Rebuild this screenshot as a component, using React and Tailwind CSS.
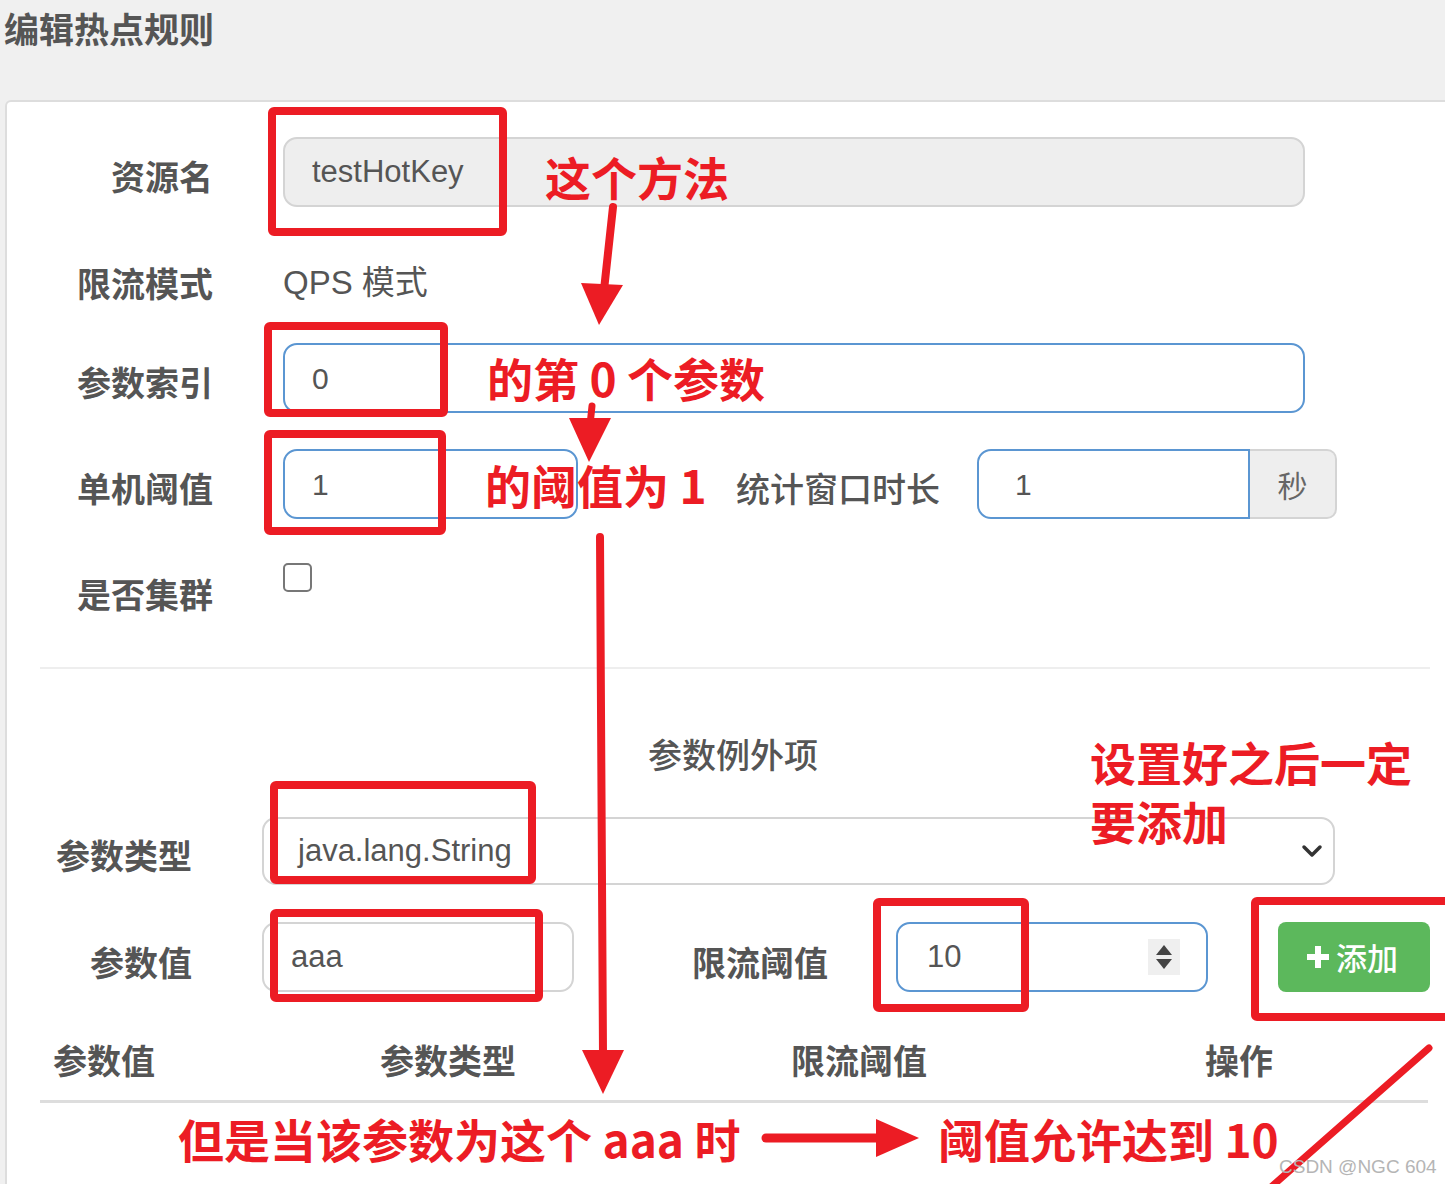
import React from "react";

const RED = "#ec1c24";

function Label({ children, w = "w-[206px]", pt = "pt-[8px]" }) {
  return (
    <div className={`${w} ${pt} shrink-0 text-right text-[34px] font-bold leading-[44px] text-[#555]`}>
      {children}
    </div>
  );
}

function Annotations() {
  return (
    <svg
      className="pointer-events-none absolute left-0 top-0"
      width="1445"
      height="1184"
      viewBox="0 0 1445 1184"
    >
      <g fill="none" stroke={RED} strokeWidth="8" strokeLinejoin="round">
        <rect x="272" y="111" width="231" height="121" rx="2" />
        <rect x="268" y="326" width="176" height="87" rx="2" />
        <rect x="268" y="434" width="174" height="97" rx="2" />
        <rect x="274" y="785" width="258" height="95" rx="2" />
        <rect x="274" y="913" width="265" height="85" rx="2" />
        <rect x="877" y="902" width="148" height="106" rx="2" />
        <rect x="1255" y="901" width="220" height="116" rx="2" />
      </g>
      <g stroke={RED} strokeLinecap="round" fill="none">
        <line x1="613" y1="207" x2="604" y2="290" strokeWidth="8" />
        <line x1="592" y1="406" x2="590" y2="425" strokeWidth="7" />
        <line x1="600" y1="537" x2="603" y2="1055" strokeWidth="8" />
        <line x1="766" y1="1138" x2="882" y2="1138" strokeWidth="9" />
        <line x1="1429" y1="1048" x2="1262" y2="1195" strokeWidth="7" />
      </g>
      <g fill={RED}>
        <polygon points="581,283 623,285 599,325" />
        <polygon points="569,418 611,418 589,462" />
        <polygon points="582,1050 624,1050 603,1094" />
        <polygon points="876,1119 876,1157 919,1138" />
      </g>
    </svg>
  );
}

export default function App() {
  return (
    <div className="relative h-[1184px] w-[1445px] overflow-hidden bg-[#f0f0f0] font-['Liberation_Sans','Noto_Sans_CJK_SC',sans-serif]">
      <div className="h-[100px] pl-[4px] pt-[6px] text-[35px] font-bold leading-[44px] text-[#555] font-['Noto_Sans_CJK_SC',sans-serif]">
        编辑热点规则
      </div>

      <div className="ml-[5px] h-[1100px] w-[1470px] rounded-tl-[6px] border-2 border-[#ddd] bg-white pt-[35px] font-['Noto_Sans_CJK_SC','Liberation_Sans',sans-serif]">
        {/* 资源名 */}
        <div className="flex h-[70px] items-center">
          <Label>资源名</Label>
          <div className="ml-[70px] flex h-[70px] w-[1022px] items-center rounded-[14px] border-2 border-[#d4d4d4] bg-[#eee] pl-[27px] text-[31px] text-[#555] font-['Liberation_Sans',sans-serif]">
            testHotKey
          </div>
        </div>

        {/* 限流模式 */}
        <div className="mt-[41px] flex h-[70px] items-center">
          <Label pt="pt-0">限流模式</Label>
          <div className="ml-[70px] text-[33px] leading-[44px] text-[#555] font-['Liberation_Sans','Noto_Sans_CJK_SC',sans-serif]">
            QPS 模式
          </div>
        </div>

        {/* 参数索引 */}
        <div className="mt-[25px] flex h-[70px] items-center">
          <Label>参数索引</Label>
          <div className="ml-[70px] flex h-[70px] w-[1022px] items-center rounded-[14px] border-2 border-[#5b96d2] pl-[27px] text-[30px] text-[#555] font-['Liberation_Sans',sans-serif]">
            0
          </div>
        </div>

        {/* 单机阈值 */}
        <div className="mt-[36px] flex h-[70px] items-center">
          <Label>单机阈值</Label>
          <div className="ml-[70px] flex h-[70px] w-[295px] items-center rounded-[14px] border-2 border-[#5b96d2] pl-[27px] text-[30px] text-[#555] font-['Liberation_Sans',sans-serif]">
            1
          </div>
          <div className="w-[362px] pt-[8px] text-right text-[34px] font-medium leading-[44px] text-[#555]">
            统计窗口时长
          </div>
          <div className="ml-[37px] flex h-[70px] w-[360px]">
            <div className="flex h-full w-[273px] items-center rounded-l-[14px] border-2 border-[#5b96d2] pl-[36px] text-[30px] text-[#555] font-['Liberation_Sans',sans-serif]">
              1
            </div>
            <div className="flex h-full flex-1 items-center justify-center rounded-r-[10px] border-2 border-l-0 border-[#d4d4d4] bg-[#eee] text-[30px] text-[#666]">
              秒
            </div>
          </div>
        </div>

        {/* 是否集群 */}
        <div className="mt-[36px] flex h-[70px] items-start">
          <Label pt="pt-[17px]">是否集群</Label>
          <div className="ml-[70px] mt-[8px] h-[29px] w-[29px] rounded-[5px] border-2 border-[#777] bg-white" />
        </div>

        <div className="ml-[33px] mt-[42px] w-[1390px] border-t-2 border-[#eee]" />

        <div className="mt-[63px] pl-[641px] text-[34px] font-medium leading-[44px] text-[#555]">
          参数例外项
        </div>

        {/* 参数类型 */}
        <div className="mt-[41px] flex h-[68px] items-center">
          <Label w="w-[185px]" pt="pt-[8px]">参数类型</Label>
          <div className="ml-[70px] flex h-[68px] w-[1073px] items-center justify-between rounded-[14px] border-2 border-[#d4d4d4] pl-[34px] pr-[10px] text-[31px] text-[#555] font-['Liberation_Sans',sans-serif]">
            <span>java.lang.String</span>
            <svg width="22" height="14" viewBox="0 0 22 14">
              <path d="M3 3 L11 11 L19 3" fill="none" stroke="#333" strokeWidth="3.5" strokeLinecap="round" strokeLinejoin="round" />
            </svg>
          </div>
        </div>

        {/* 参数值 / 限流阈值 / 添加 */}
        <div className="mt-[37px] flex h-[70px] items-center">
          <Label w="w-[185px]" pt="pt-[10px]">参数值</Label>
          <div className="ml-[70px] flex h-[70px] w-[312px] items-center rounded-[14px] border-2 border-[#d4d4d4] pl-[27px] text-[31px] text-[#555] font-['Liberation_Sans',sans-serif]">
            aaa
          </div>
          <div className="w-[254px] pt-[10px] text-right text-[34px] font-bold leading-[44px] text-[#555]">
            限流阈值
          </div>
          <div className="ml-[68px] flex h-[70px] w-[312px] items-center justify-between rounded-[14px] border-2 border-[#5b96d2] pl-[29px] pr-[26px] text-[31px] text-[#555] font-['Liberation_Sans',sans-serif]">
            <span>10</span>
            <div className="flex h-[36px] w-[32px] items-center justify-center bg-[#efefef]">
              <svg width="18" height="28" viewBox="0 0 18 28">
                <polygon points="9,2 17,12 1,12" fill="#444" />
                <polygon points="1,16 17,16 9,26" fill="#444" />
              </svg>
            </div>
          </div>
          <div className="ml-[70px] flex h-[70px] w-[152px] items-center justify-center gap-[6px] rounded-[8px] bg-[#5cb85c] pr-[4px] text-[31px] font-medium text-white">
            <svg width="24" height="24" viewBox="0 0 24 24">
              <rect x="9" y="1" width="6" height="22" fill="#fff" />
              <rect x="1" y="9" width="22" height="6" fill="#fff" />
            </svg>
            <span>添加</span>
          </div>
        </div>

        {/* table header */}
        <div className="ml-[33px] mt-[46px] grid w-[1388px] grid-cols-[327px_411px_414px_1fr] border-b-[3px] border-[#ddd] pb-[18px] text-[34px] font-bold leading-[44px] text-[#555]">
          <div className="pl-[13px]">参数值</div>
          <div className="pl-[13px]">参数类型</div>
          <div className="pl-[13px]">限流阈值</div>
          <div className="pl-[13px]">操作</div>
        </div>
      </div>

      <Annotations />

      <div className="pointer-events-none absolute inset-0 font-['Noto_Sans_CJK_SC',sans-serif] text-[46px] font-bold leading-[46px] text-[#ec1c24]">
        <div className="absolute left-[545px] top-[153px]">这个方法</div>
        <div className="absolute left-[487px] top-[354px] whitespace-pre">的第 0 个参数</div>
        <div className="absolute left-[485px] top-[461px] whitespace-pre">的阈值为 1</div>
        <div className="absolute left-[1090px] top-[732px] w-[340px] leading-[59px]">
          设置好之后一定
          <br />
          要添加
        </div>
        <div className="absolute left-[178px] top-[1115px] whitespace-pre">但是当该参数为这个 aaa 时</div>
        <div className="absolute left-[938px] top-[1115px] whitespace-pre">阈值允许达到 10</div>
      </div>

      <div className="absolute left-[1279px] top-[1155px] text-[19px] leading-[24px] text-[#b5b5b5] font-['Liberation_Sans',sans-serif]">
        CSDN @NGC 604
      </div>
    </div>
  );
}
